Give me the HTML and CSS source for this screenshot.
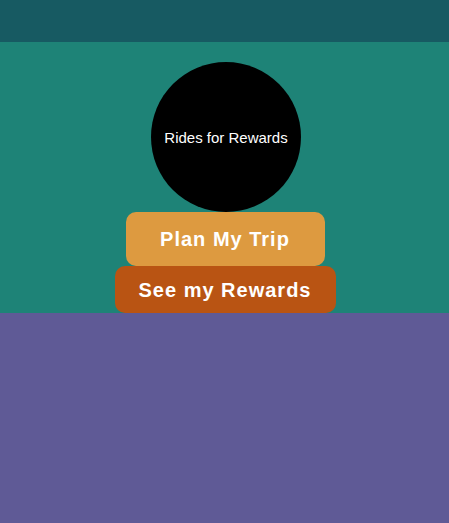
FILE: index.html
```html
<!DOCTYPE html>
<html lang="en">
<head>
<meta charset="utf-8">
<title>Rides for Rewards</title>
<link rel="stylesheet" href="styles.css">
</head>
<body>
  <header class="topbar"></header>
  <main class="hero">
    <div class="logo">Rides for Rewards</div>
    <button class="btn btn-plan">Plan My Trip</button>
    <button class="btn btn-rewards">See my Rewards</button>
  </main>
  <section class="lower"></section>
</body>
</html>
```
FILE: styles.css
```css
* { box-sizing: border-box; }
html, body { margin: 0; padding: 0; height: 100%; }
body {
  font-family: "Liberation Sans", Arial, sans-serif;
  background: #5f5a96;
  display: flex;
  flex-direction: column;
}
.topbar {
  height: 42px;
  background: #175a62;
}
.hero {
  background: #1e8377;
  display: flex;
  flex-direction: column;
  align-items: center;
  padding: 20px 0 0 3px;
}
.logo {
  width: 150px;
  height: 150px;
  border-radius: 50%;
  background: #000;
  color: #fff;
  font-size: 15px;
  display: flex;
  align-items: center;
  justify-content: center;
}
.btn {
  border: none;
  font-family: "Liberation Sans", Arial, sans-serif;
  font-weight: bold;
  font-size: 20px;
  letter-spacing: 1px;
  color: #fff;
  border-radius: 10px;
  line-height: 23px;
  margin-left: -2px;
}
.btn-plan {
  background: #dd9a40;
  width: 199px;
  height: 54px;
  padding: 0;
}
.btn-rewards {
  background: #b95413;
  width: 221px;
  height: 47px;
  padding: 2px 0 0;
}
.lower { flex: 1; }
```
